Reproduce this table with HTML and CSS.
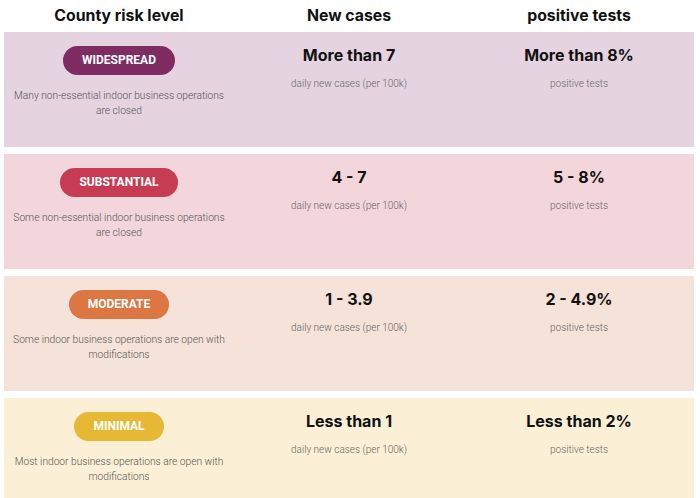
FILE: index.html
```html
<!DOCTYPE html>
<html>
<head>
<meta charset="utf-8">
<link rel="stylesheet" href="styles.css">
</head>
<body>
<div class="table">
  <div class="head">
    <div class="hcell">County risk level</div>
    <div class="hcell">New cases</div>
    <div class="hcell">positive tests</div>
  </div>
  <div class="row widespread">
    <div class="cell">
      <span class="badge">WIDESPREAD</span>
      <p class="desc">Many non-essential indoor business operations are closed</p>
    </div>
    <div class="cell">
      <div class="value">More than 7</div>
      <p class="sub">daily new cases (per 100k)</p>
    </div>
    <div class="cell">
      <div class="value">More than 8%</div>
      <p class="sub">positive tests</p>
    </div>
  </div>
  <div class="row substantial">
    <div class="cell">
      <span class="badge">SUBSTANTIAL</span>
      <p class="desc">Some non-essential indoor business operations are closed</p>
    </div>
    <div class="cell">
      <div class="value">4 - 7</div>
      <p class="sub">daily new cases (per 100k)</p>
    </div>
    <div class="cell">
      <div class="value">5 - 8%</div>
      <p class="sub">positive tests</p>
    </div>
  </div>
  <div class="row moderate">
    <div class="cell">
      <span class="badge">MODERATE</span>
      <p class="desc">Some indoor business operations are open with modifications</p>
    </div>
    <div class="cell">
      <div class="value">1 - 3.9</div>
      <p class="sub">daily new cases (per 100k)</p>
    </div>
    <div class="cell">
      <div class="value">2 - 4.9%</div>
      <p class="sub">positive tests</p>
    </div>
  </div>
  <div class="row minimal">
    <div class="cell">
      <span class="badge">MINIMAL</span>
      <p class="desc">Most indoor business operations are open with modifications</p>
    </div>
    <div class="cell">
      <div class="value">Less than 1</div>
      <p class="sub">daily new cases (per 100k)</p>
    </div>
    <div class="cell">
      <div class="value">Less than 2%</div>
      <p class="sub">positive tests</p>
    </div>
  </div>
</div>
</body>
</html>
```
FILE: styles.css
```css
html, body {
  margin: 0;
  padding: 0;
  background: #fff;
}
body {
  padding: 0 6px 0 4px;
  font-family: Roboto, "Liberation Sans", sans-serif;
}
.table {
  display: flex;
  flex-direction: column;
  gap: 7px;
}
.head {
  display: grid;
  grid-template-columns: repeat(3, 1fr);
  height: 32px;
  align-items: center;
  margin-bottom: -7px;
}
.hcell {
  text-align: center;
  font-family: Inter, "DejaVu Sans", sans-serif;
  font-weight: 700;
  font-size: 15.8px;
  color: #111;
  padding-bottom: 2px;
}
.row {
  display: grid;
  grid-template-columns: repeat(3, 1fr);
  height: 115px;
}
.cell {
  display: flex;
  flex-direction: column;
  align-items: center;
  padding: 14px 5px 0;
  text-align: center;
}
.badge {
  display: inline-block;
  height: 29px;
  line-height: 29px;
  padding: 0 19px;
  border-radius: 15px;
  color: #fff;
  font-weight: 700;
  font-size: 12px;
}
.desc {
  margin: 13px 0 0;
  font-size: 10.2px;
  line-height: 15px;
  font-weight: 300;
  color: #555;
}
.value {
  font-family: Inter, "DejaVu Sans", sans-serif;
  font-weight: 700;
  font-size: 16px;
  color: #111;
  line-height: 18px;
}
.sub {
  margin: 14px 0 0;
  font-size: 10px;
  font-weight: 300;
  color: #666;
}
.widespread { background: #e6d3e0; }
.widespread .badge { background: #7f2c62; }
.substantial { background: #f3d6dc; }
.substantial .badge { background: #c73c52; }
.moderate { background: #f5e2d8; }
.moderate .badge { background: #dc7642; }
.minimal { background: #fbf0d6; }
.minimal .badge { background: #e6b834; }
```
